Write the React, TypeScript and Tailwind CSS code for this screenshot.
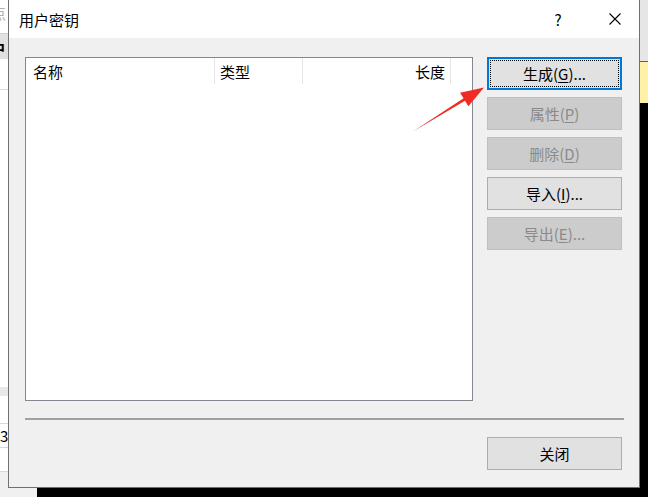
import React from "react";

const FONT = '"Microsoft YaHei", "Noto Sans CJK SC", "Noto Sans", sans-serif';

function Btn({
  children,
  disabled,
  focused,
}: {
  children: React.ReactNode;
  disabled?: boolean;
  focused?: boolean;
}) {
  if (focused) {
    return (
      <div className="relative w-[135px] h-[33px] bg-[#e1e1e1] border-2 border-[#0078d7] flex items-center justify-center text-[15px] leading-none text-black">
        <div className="absolute inset-[1px] border border-dotted border-black" />
        <span className="relative">{children}</span>
      </div>
    );
  }
  return (
    <div
      className={
        disabled
          ? "w-[135px] h-[33px] bg-[#cccccc] border border-[#bfbfbf] flex items-center justify-center text-[15px] leading-none text-[#8a8a8a]"
          : "w-[135px] h-[33px] bg-[#e1e1e1] border border-[#adadad] flex items-center justify-center text-[15px] leading-none text-black"
      }
    >
      <span>{children}</span>
    </div>
  );
}

function U({ c }: { c: string }) {
  return <span className="underline underline-offset-[2px] decoration-1">{c}</span>;
}

export default function App() {
  return (
    <div
      className="relative w-[648px] h-[497px] overflow-hidden bg-black"
      style={{ fontFamily: FONT }}
    >
      {/* background app on the left */}
      <div className="absolute left-0 top-0 w-[8px] h-[488px] bg-white flex flex-col overflow-hidden">
        <div className="h-[33px] relative overflow-hidden">
          <span className="absolute left-[-9px] top-[5px] text-[15px] leading-none text-[#b0b0b0]">点</span>
        </div>
        <div className="h-[26px] bg-[#e1e1e1] border-t border-[#d0d0d0] relative overflow-hidden">
          <span className="absolute left-[-10px] top-[6px] text-[15px] leading-none font-bold text-black">中</span>
        </div>
        <div className="h-[30px]" />
        <div className="h-px bg-[#dcdcdc]" />
        <div className="h-[297px]" />
        <div className="h-[9px] bg-[#e8e8e8]" />
        <div className="h-[27px]" />
        <div className="h-px bg-[#d8d8d8]" />
        <div className="h-[23px] relative overflow-hidden">
          <span className="absolute left-[0px] top-[4px] text-[15px] leading-none text-black">3</span>
        </div>
        <div className="h-px bg-[#d8d8d8]" />
        <div className="h-[23px]" />
        <div className="h-px bg-[#d8d8d8]" />
        <div className="flex-1 bg-[#f0f0f0]" />
      </div>
      <div className="absolute left-0 top-[488px] w-[37px] h-[9px] bg-[#f0f0f0]" />

      {/* background on the right */}
      <div className="absolute left-[640px] top-0 w-[8px] flex flex-col">
        <div className="h-[61px] bg-[#e6e6e6]" />
        <div className="h-px bg-[#0078d7]" />
        <div className="h-[41px] bg-[#fff2a8]" />
      </div>

      {/* dialog window */}
      <div className="absolute left-[8px] top-0 w-[632px] h-[488px] border-x border-b border-[#707070] flex flex-col">
        {/* title bar */}
        <div className="h-[38px] bg-white flex items-center pl-[10px]">
          <span className="text-[15px] leading-none text-black">用户密钥</span>
          <div className="flex-1" />
          <span className="w-[46px] text-center text-[15px] leading-none text-black mr-[11px]">?</span>
          <div className="w-[46px] h-[38px] flex items-center justify-center mr-[1px]">
            <svg width="12" height="12" viewBox="0 0 12 12">
              <path d="M0.5 0.5 L11.5 11.5 M11.5 0.5 L0.5 11.5" stroke="#000" strokeWidth="1.1" fill="none" />
            </svg>
          </div>
        </div>

        {/* client area */}
        <div className="flex-1 bg-[#f0f0f0] pl-[16px] pt-[19px] flex flex-col">
          <div className="flex">
            {/* list view */}
            <div className="w-[448px] h-[344px] border border-[#828790] bg-white">
              <div className="flex h-[26px] text-[15px] leading-none text-black">
                <div className="w-[189px] border-r border-[#e5e5e5] flex items-center pl-[7px]">名称</div>
                <div className="w-[88px] border-r border-[#e5e5e5] flex items-center pl-[5px]">类型</div>
                <div className="w-[148px] border-r border-[#e5e5e5] flex items-center justify-end pr-[5px]">长度</div>
              </div>
            </div>
            {/* buttons */}
            <div className="ml-[14px] flex flex-col gap-[7px]">
              <Btn focused>
                生成(<U c="G" />)...
              </Btn>
              <Btn disabled>
                属性(<U c="P" />)
              </Btn>
              <Btn disabled>
                删除(<U c="D" />)
              </Btn>
              <Btn>
                导入(<U c="I" />)...
              </Btn>
              <Btn disabled>
                导出(<U c="E" />)...
              </Btn>
            </div>
          </div>

          <div className="mt-[17px] mr-[15px] h-[2px] bg-[#a0a0a0]" />

          <div className="mt-[17px] flex justify-end pr-[17px]">
            <Btn>关闭</Btn>
          </div>
        </div>
      </div>

      {/* red annotation arrow */}
      <svg
        className="absolute left-0 top-0 pointer-events-none"
        width="648"
        height="497"
        viewBox="0 0 648 497"
      >
        <polygon
          points="413,131.5 463.6,98.2 460,92.7 484,87.5 468.4,106.3 465,100.8"
          fill="#ee2b25"
        />
      </svg>
    </div>
  );
}
